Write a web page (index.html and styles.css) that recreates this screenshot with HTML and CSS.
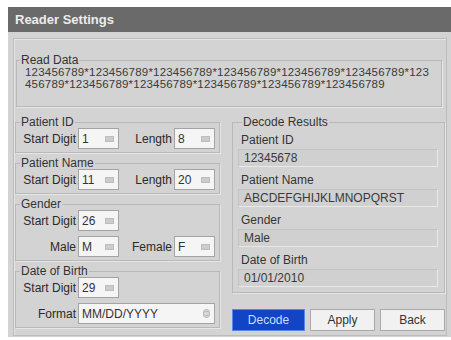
FILE: index.html
```html
<!DOCTYPE html>
<html lang="en">

<head>
    <meta charset="UTF-8">
    <meta name="viewport" content="width=device-width, initial-scale=1.0">
    <title>Reader Settings</title>
    <link rel="stylesheet" href="styles.css">
</head>

<body>
    <div class="dialog">
        <div class="title">Reader Settings</div>
        <div class="panel">
            <fieldset class="group read-data">
                <legend>Read Data</legend>
                <div class="read-text">123456789*123456789*123456789*123456789*123456789*123456789*123<br>456789*123456789*123456789*123456789*123456789*123456789</div>
            </fieldset>

            <div class="columns">
                <div class="left-col">
                    <fieldset class="group">
                        <legend>Patient ID</legend>
                        <div class="row">
                            <span class="lbl">Start Digit</span>
                            <span class="field">1<svg class="kbd" width="9" height="6" viewBox="0 0 9 6"><rect x="0" y="0" width="9" height="6" fill="#bdbdbd"/><path d="M1 2h7M1 4h7" stroke="#e2e2e2" stroke-width="0.8"/></svg></span>
                            <span class="lbl lbl2">Length</span>
                            <span class="field">8<svg class="kbd" width="9" height="6" viewBox="0 0 9 6"><rect x="0" y="0" width="9" height="6" fill="#bdbdbd"/><path d="M1 2h7M1 4h7" stroke="#e2e2e2" stroke-width="0.8"/></svg></span>
                        </div>
                    </fieldset>

                    <fieldset class="group">
                        <legend>Patient Name</legend>
                        <div class="row">
                            <span class="lbl">Start Digit</span>
                            <span class="field">11<svg class="kbd" width="9" height="6" viewBox="0 0 9 6"><rect x="0" y="0" width="9" height="6" fill="#bdbdbd"/><path d="M1 2h7M1 4h7" stroke="#e2e2e2" stroke-width="0.8"/></svg></span>
                            <span class="lbl lbl2">Length</span>
                            <span class="field">20<svg class="kbd" width="9" height="6" viewBox="0 0 9 6"><rect x="0" y="0" width="9" height="6" fill="#bdbdbd"/><path d="M1 2h7M1 4h7" stroke="#e2e2e2" stroke-width="0.8"/></svg></span>
                        </div>
                    </fieldset>

                    <fieldset class="group">
                        <legend>Gender</legend>
                        <div class="row">
                            <span class="lbl">Start Digit</span>
                            <span class="field">26<svg class="kbd" width="9" height="6" viewBox="0 0 9 6"><rect x="0" y="0" width="9" height="6" fill="#bdbdbd"/><path d="M1 2h7M1 4h7" stroke="#e2e2e2" stroke-width="0.8"/></svg></span>
                        </div>
                        <div class="row">
                            <span class="lbl">Male</span>
                            <span class="field">M<svg class="kbd" width="9" height="6" viewBox="0 0 9 6"><rect x="0" y="0" width="9" height="6" fill="#bdbdbd"/><path d="M1 2h7M1 4h7" stroke="#e2e2e2" stroke-width="0.8"/></svg></span>
                            <span class="lbl lbl2">Female</span>
                            <span class="field">F<svg class="kbd" width="9" height="6" viewBox="0 0 9 6"><rect x="0" y="0" width="9" height="6" fill="#bdbdbd"/><path d="M1 2h7M1 4h7" stroke="#e2e2e2" stroke-width="0.8"/></svg></span>
                        </div>
                    </fieldset>

                    <fieldset class="group">
                        <legend>Date of Birth</legend>
                        <div class="row">
                            <span class="lbl">Start Digit</span>
                            <span class="field">29<svg class="kbd" width="9" height="6" viewBox="0 0 9 6"><rect x="0" y="0" width="9" height="6" fill="#bdbdbd"/><path d="M1 2h7M1 4h7" stroke="#e2e2e2" stroke-width="0.8"/></svg></span>
                        </div>
                        <div class="row">
                            <span class="lbl">Format</span>
                            <span class="field wide">MM/DD/YYYY<svg class="spin" width="7" height="9" viewBox="0 0 7 9"><rect x="0.5" y="0.5" width="6" height="8" rx="3" fill="#dcdcdc" stroke="#b0b0b0"/><path d="M2 3.5l1.5-1.5 1.5 1.5M2 5.5l1.5 1.5 1.5-1.5" fill="none" stroke="#999" stroke-width="0.8"/></svg></span>
                        </div>
                    </fieldset>
                </div>

                <div class="right-col">
                    <fieldset class="group results">
                        <legend>Decode Results</legend>
                        <div class="result">
                            <div class="res-label">Patient ID</div>
                            <div class="res-value">12345678</div>
                        </div>
                        <div class="result">
                            <div class="res-label">Patient Name</div>
                            <div class="res-value">ABCDEFGHIJKLMNOPQRST</div>
                        </div>
                        <div class="result">
                            <div class="res-label">Gender</div>
                            <div class="res-value">Male</div>
                        </div>
                        <div class="result">
                            <div class="res-label">Date of Birth</div>
                            <div class="res-value">01/01/2010</div>
                        </div>
                    </fieldset>
                    <div class="buttons">
                        <button class="btn primary">Decode</button>
                        <button class="btn apply">Apply</button>
                        <button class="btn back">Back</button>
                    </div>
                </div>
            </div>
        </div>
    </div>
</body>

</html>
```

FILE: styles.css
```css
body {
    margin: 0;
    padding: 0;
    background-color: #fff;
    font-family: "Liberation Sans", Arial, sans-serif;
    font-size: 12px;
    color: #2a2a2a;
}

.dialog {
    margin: 7px 0 0 8px;
    width: 443px;
    height: 330px;
    background-color: #d3d3d3;
    display: flex;
    flex-direction: column;
}

.title {
    height: 25px;
    line-height: 25px;
    padding-left: 7px;
    background-color: #6a6a6a;
    color: #ececec;
    font-size: 13px;
    font-weight: bold;
}

.panel {
    flex: 1;
    margin: 6px 4px 1px 5px;
    border: 1px solid #bcbcbc;
    box-shadow: inset 1px 1px 0 #e4e4e4;
    padding: 0 0 0 1px;
}

/* group boxes */
.group {
    margin: 0;
    padding: 1px 0 3px 0;
    border: 1px solid #b9b9b9;
    box-shadow: 1px 1px 0 #e6e6e6;
    min-width: 0;
}

.group legend {
    padding: 0 1px;
    margin-left: 4px;
    line-height: 10px;
    font-size: 12px;
    color: #333;
}

.read-data {
    margin: 16px 4px 0 1px;
    padding: 1px 0 16px 0;
}

.read-data legend {
    margin-left: 3px;
}

.read-text {
    padding-left: 8px;
    line-height: 12px;
    font-size: 11.5px;
    letter-spacing: 0.2px;
    color: #3a3a3a;
}

.columns {
    display: flex;
    margin-top: 10px;
}

.left-col {
    width: 205px;
    display: flex;
    flex-direction: column;
    gap: 5px;
}

.row {
    display: flex;
    align-items: center;
    gap: 2px;
    height: 21px;
}

.row + .row {
    margin-top: 5px;
}

.lbl {
    width: 60px;
    text-align: right;
}

.lbl2 {
    width: 51px;
}

.field {
    width: 41px;
    height: 21px;
    box-sizing: border-box;
    display: flex;
    align-items: center;
    justify-content: space-between;
    padding: 0 4px 0 3px;
    background-color: #f5f5f5;
    border: 1px solid #a3a3a3;
    color: #333;
}

.field.wide {
    width: 137px;
}

/* right column */
.right-col {
    width: 213px;
    margin-left: 12px;
    display: flex;
    flex-direction: column;
}

.results {
    padding: 6px 6px 5px 5px;
}

.result + .result {
    margin-top: 6px;
}

.res-label {
    line-height: 14px;
    padding-left: 3px;
    color: #333;
}

.res-value {
    margin-top: 2px;
    height: 18px;
    line-height: 16px;
    box-sizing: border-box;
    padding-left: 5px;
    border: 1px solid;
    border-color: #c2c2c2 #e8e8e8 #e8e8e8 #c2c2c2;
    background-color: #d0d0d0;
    color: #3a3a3a;
}

.buttons {
    display: flex;
    gap: 5px;
    margin-top: 16px;
}

.btn {
    height: 22px;
    font-family: "Liberation Sans", Arial, sans-serif;
    font-size: 12px;
    border: 1px solid #a9a9a9;
    background-color: #f1f1f1;
    color: #333;
    padding: 0;
    cursor: pointer;
}

.btn.primary {
    width: 73px;
    background-color: #1244c6;
    border-color: #5a86e8;
    color: #cfdcff;
}

.btn.apply {
    width: 65px;
}

.btn.back {
    width: 65px;
}
```
